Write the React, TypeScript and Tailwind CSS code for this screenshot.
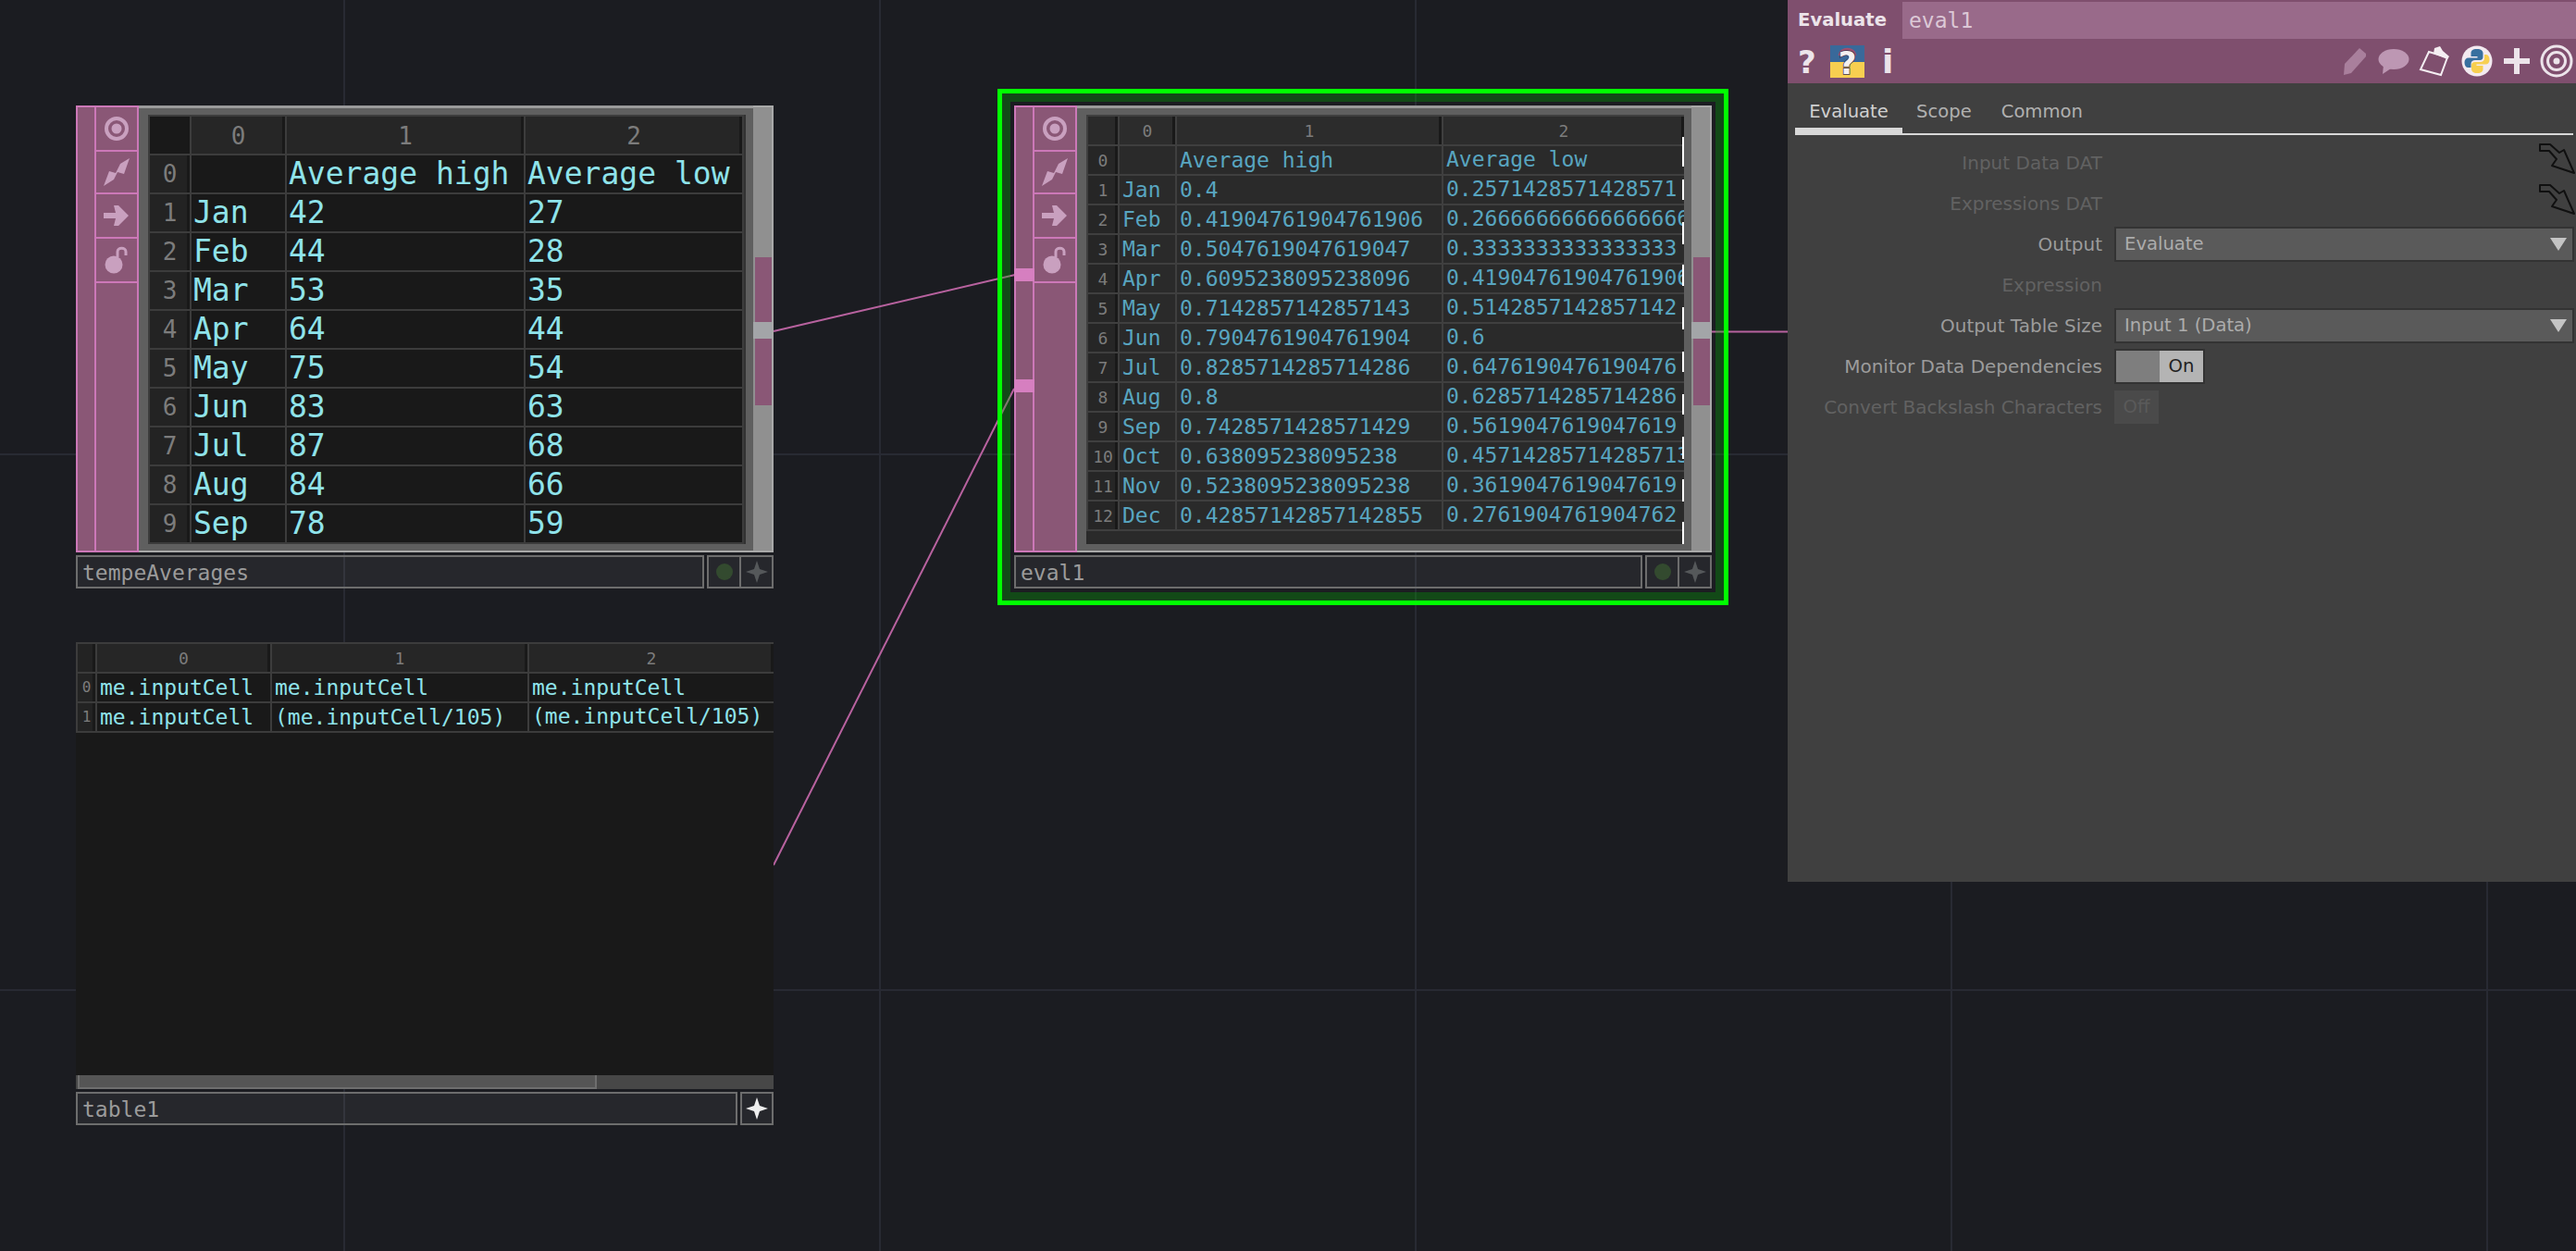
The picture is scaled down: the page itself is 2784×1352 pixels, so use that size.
import React from 'react'

const MONO = 'font-["DejaVu_Sans_Mono",monospace]'

const averages = [
  ['', 'Average high', 'Average low'],
  ['Jan', '42', '27'],
  ['Feb', '44', '28'],
  ['Mar', '53', '35'],
  ['Apr', '64', '44'],
  ['May', '75', '54'],
  ['Jun', '83', '63'],
  ['Jul', '87', '68'],
  ['Aug', '84', '66'],
  ['Sep', '78', '59'],
]

const evaluated = [
  ['', 'Average high', 'Average low'],
  ['Jan', '0.4', '0.2571428571428571'],
  ['Feb', '0.41904761904761906', '0.26666666666666666'],
  ['Mar', '0.5047619047619047', '0.3333333333333333'],
  ['Apr', '0.6095238095238096', '0.41904761904761906'],
  ['May', '0.7142857142857143', '0.5142857142857142'],
  ['Jun', '0.7904761904761904', '0.6'],
  ['Jul', '0.8285714285714286', '0.6476190476190476'],
  ['Aug', '0.8', '0.6285714285714286'],
  ['Sep', '0.7428571428571429', '0.5619047619047619'],
  ['Oct', '0.638095238095238', '0.45714285714285713'],
  ['Nov', '0.5238095238095238', '0.3619047619047619'],
  ['Dec', '0.42857142857142855', '0.2761904761904762'],
]

const expressions = [
  ['me.inputCell', 'me.inputCell', 'me.inputCell'],
  ['me.inputCell', '(me.inputCell/105)', '(me.inputCell/105)'],
]

// the white ticks down the right edge of the eval1 viewer
const ticks = [
  [24, 32], [70, 22], [116, 24], [162, 23], [208, 24], [256, 22], [302, 22], [348, 24], [394, 24], [440, 24],
]

function TargetIcon() {
  return (
    <svg width="28" height="28" viewBox="0 0 28 28">
      <circle cx="14" cy="14" r="11" fill="none" stroke="#c9a0bf" strokeWidth="4" />
      <circle cx="14" cy="14" r="5.5" fill="#c9a0bf" />
    </svg>
  )
}

function BoltIcon() {
  return (
    <svg width="28" height="30" viewBox="0 0 28 30">
      <polygon points="0,30 6,14 13,16 18,6 28,0 22,17 15,15 11,23" fill="#c9a0bf" />
    </svg>
  )
}

function ArrowIcon() {
  return (
    <svg width="28" height="24" viewBox="0 0 28 24">
      <polygon points="0,9 13,9 11,1 16,1 27,12 16,23 11,23 13,15 0,15" fill="#c9a0bf" />
    </svg>
  )
}

function LockIcon() {
  return (
    <svg width="26" height="30" viewBox="0 0 26 30">
      <circle cx="10" cy="20" r="9.5" fill="#c9a0bf" />
      <path d="M14 12 V6 C14 1 23 1 23 6 V10" fill="none" stroke="#c9a0bf" strokeWidth="3" />
    </svg>
  )
}

function StarIcon({ color }: { color: string }) {
  return (
    <svg width="24" height="24" viewBox="0 0 24 24">
      <polygon points="12,0 15,9 24,12 15,15 12,24 9,15 0,12 9,9" fill={color} />
    </svg>
  )
}

function HeaderCell({ label, size, inner }: { label?: string; size: string; inner: string }) {
  return (
    <div className={`bg-[#191919] pr-[3px] ${MONO}`}>
      <div className={`h-full flex items-center justify-center pl-[3px] text-[#7c7c7c] ${size} ${inner}`}>{label}</div>
    </div>
  )
}

function OpChrome({ children }: { children: React.ReactNode }) {
  return (
    <div className="flex h-[483px]">
      <div className="relative w-[20px] border-y-2 border-l-2 border-[#cc78b8] bg-[#8a5776]" />
      <div className="flex w-[48px] flex-col border-2 border-[#cc78b8] bg-[#8a5776]">
        <div className="flex h-[48px] items-center justify-center border-b-2 border-[#cc78b8]"><TargetIcon /></div>
        <div className="flex h-[46px] items-center justify-center border-b-2 border-[#cc78b8]"><BoltIcon /></div>
        <div className="flex h-[48px] items-center justify-center border-b-2 border-[#cc78b8]"><ArrowIcon /></div>
        <div className="flex h-[48px] items-center justify-center border-b-2 border-[#cc78b8]"><LockIcon /></div>
      </div>
      <div className="w-[664px] border-t-[3px] border-b-2 border-t-[#9a9a9a] border-b-[#a8a8a8] bg-[#5f5f5f] pl-[10px] pt-[7px]">
        {children}
      </div>
      <div className="flex w-[22px] flex-col border-y-2 border-r-2 border-[#a8a8a8] bg-[#909090]">
        <div className="h-[162px]" />
        <div className="ml-[2px] h-[70px] bg-[#8a5776]" />
        <div className="h-[18px] bg-[#a3a5a8]" />
        <div className="ml-[2px] h-[72px] bg-[#8a5776]" />
      </div>
    </div>
  )
}

function NameBar({ name, dim }: { name: string; dim: boolean }) {
  return (
    <div className="mt-[3px] flex h-[36px] gap-[3px]">
      <div className={`flex flex-1 items-center border-2 border-[#6d6d6d] bg-white/5 pl-[5px] pt-[2px] text-[23px] text-[#9b9b9b] ${MONO}`}>{name}</div>
      {dim ? (
        <div className="flex w-[72px] border-2 border-[#6d6d6d] bg-white/5">
          <div className="flex w-[35px] items-center justify-center border-r-2 border-[#6d6d6d]">
            <div className="h-[18px] w-[18px] rounded-full bg-[#334a2f]" />
          </div>
          <div className="flex flex-1 items-center justify-center"><StarIcon color="#55585a" /></div>
        </div>
      ) : (
        <div className="flex w-[36px] items-center justify-center border-2 border-[#6d6d6d] bg-white/5"><StarIcon color="#eeeeee" /></div>
      )}
    </div>
  )
}

function AveragesTable() {
  return (
    <div className={`grid h-[464px] w-[646px] grid-cols-[43px_101px_256px_234px] grid-rows-[repeat(11,40px)] gap-[2px] border-r-2 border-[#333] bg-[#3c3c3c] p-[2px] text-[33px] text-[#8fe3ea] ${MONO}`}>
      <HeaderCell size="text-[26px]" inner="bg-[#191919]" />
      {['0', '1', '2'].map((c) => (
        <HeaderCell key={c} label={c} size="text-[26px] pt-[2px]" inner="bg-[#262626]" />
      ))}
      {averages.map((row, i) => (
        <React.Fragment key={i}>
          <HeaderCell label={String(i)} size="text-[26px]" inner="bg-[#232323]" />
          {row.map((cell, j) => (
            <div key={j} className="flex items-center overflow-hidden whitespace-pre bg-[#191919] pl-[2px] leading-[40px]">{cell}</div>
          ))}
        </React.Fragment>
      ))}
    </div>
  )
}

function EvaluatedTable() {
  return (
    <div className="relative h-[464px] w-[646px] overflow-hidden bg-[#2a2a2a]">
      <div className={`grid grid-cols-[32px_60px_286px_260px] grid-rows-[repeat(14,30px)] gap-[2px] bg-[#3f3f3f] py-[2px] pl-[2px] text-[23px] text-[#58a5c0] ${MONO}`}>
        <HeaderCell size="text-[18px]" inner="bg-[#2a2a2a]" />
        {['0', '1', '2'].map((c) => (
          <HeaderCell key={c} label={c} size="text-[18px]" inner="bg-[#2c2c2c]" />
        ))}
        {evaluated.map((row, i) => (
          <React.Fragment key={i}>
            <HeaderCell label={String(i)} size="text-[18px]" inner="bg-[#262626]" />
            {row.map((cell, j) => (
              <div key={j} className={`flex items-center overflow-hidden whitespace-pre bg-[#2a2a2a] pl-[3px] ${j === 2 ? 'pb-[2px]' : 'pt-[1px]'}`}>{cell}</div>
            ))}
          </React.Fragment>
        ))}
      </div>
      {ticks.map(([top, height]) => (
        <div key={top} className="absolute right-0 w-[2px] bg-white" style={{ top, height }} />
      ))}
    </div>
  )
}

function ExpressionsTable() {
  return (
    <div className="flex h-[483px] flex-col overflow-hidden bg-[#191919]">
      <div className={`grid grid-cols-[19px_187px_276px_264px] grid-rows-[repeat(3,30px)] gap-[2px] bg-[#3c3c3c] py-[2px] pl-[2px] text-[23px] text-[#8fe3ea] ${MONO}`}>
        <HeaderCell size="text-[16px]" inner="bg-[#232323]" />
        {['0', '1', '2'].map((c) => (
          <HeaderCell key={c} label={c} size="text-[18px]" inner="bg-[#262626]" />
        ))}
        {expressions.map((row, i) => (
          <React.Fragment key={i}>
            <HeaderCell label={String(i)} size="text-[16px]" inner="bg-[#232323]" />
            {row.map((cell, j) => (
              <div key={j} className={`flex items-center overflow-hidden whitespace-pre bg-[#191919] pl-[3px] ${i === 1 && j === 2 ? 'pb-[2px]' : ''}`}>{cell}</div>
            ))}
          </React.Fragment>
        ))}
      </div>
      <div className="flex-1" />
      <div className="h-[15px] bg-[#474747] pl-[2px]">
        <div className="h-full w-[561px] border-r-2 border-b-2 border-l-2 border-[#6e6e6e] bg-[#555555]" />
      </div>
    </div>
  )
}

function HelpFlagIcon() {
  return (
    <svg width="37" height="35" viewBox="0 0 37 35">
      <rect width="37" height="18" fill="#39699a" />
      <rect y="18" width="37" height="17" fill="#f7cf50" />
      <path d="M10 11 C11 2 26 2 27 11" fill="none" stroke="#a0506e" strokeWidth="3" />
      <text x="18.5" y="31" textAnchor="middle" fontSize="34" fontWeight="700" fontFamily="DejaVu Sans" fill="#f4f0f0" stroke="#40304a" strokeWidth="1.5" paintOrder="stroke">?</text>
    </svg>
  )
}

function ParamArrow() {
  return (
    <svg width="40" height="34" viewBox="0 0 40 34" className="-translate-y-[4px]">
      <polygon points="1,1 12,1 22,10 27,7 38,32 14,24 19,17 11,8 1,8" fill="#404040" stroke="#101010" strokeWidth="2" strokeLinejoin="round" />
    </svg>
  )
}

function HeaderIcons() {
  return (
    <div className="flex items-center">
      <svg width="30" height="32" viewBox="0 0 30 32">
        <polygon points="4,19 20,2 27,8 27,11 11,29 3,31" fill="#a97f9c" />
      </svg>
      <svg width="34" height="32" viewBox="0 0 34 32" className="ml-[10px]">
        <ellipse cx="17" cy="14" rx="16.5" ry="11" fill="#bd97b3" />
        <polygon points="6,20 14,24 5,30" fill="#bd97b3" />
      </svg>
      <svg width="36" height="34" viewBox="0 0 36 34" className="ml-[10px]">
        <polygon points="11,7 31,13 24,32 2,26" fill="none" stroke="#f4eef2" strokeWidth="2" />
        <polygon points="17,3 23,1 26,6 33,12 31,15 16,9" fill="#f4eef2" />
      </svg>
      <svg width="34" height="34" viewBox="0 0 34 34" className="ml-[10px]">
        <circle cx="17" cy="17" r="16.5" fill="#f3eaf0" />
        <path d="M17 4 C12 4 10.5 6 10.5 8.5 V12 H17.5 V13.5 H8 C5 13.5 3.5 15.5 3.5 18.5 C3.5 22 5 24 7.5 24 H10.5 V20 C10.5 17.5 12.5 16 15 16 H20 C22.5 16 23.5 14.5 23.5 12.5 V8.5 C23.5 6 21.5 4 17 4 Z" fill="#38709f" />
        <path d="M17 30 C22 30 23.5 28 23.5 25.5 V22 H16.5 V20.5 H26 C29 20.5 30.5 18.5 30.5 15.5 C30.5 12 29 10 26.5 10 H25 V14 C25 16.5 23 18 20.5 18 H15 C12.5 18 11 19.5 11 21.5 V25.5 C11 28 13 30 17 30 Z" fill="#f7cf50" />
      </svg>
      <svg width="28" height="28" viewBox="0 0 28 28" className="ml-[12px]">
        <rect x="11" y="0" width="6" height="28" fill="#ece4ea" />
        <rect x="0" y="11" width="28" height="6" fill="#ece4ea" />
      </svg>
      <svg width="36" height="36" viewBox="0 0 36 36" className="mr-[3px] ml-[11px]">
        <circle cx="18" cy="18" r="16" fill="none" stroke="#ece4ea" strokeWidth="3" />
        <circle cx="18" cy="18" r="9.5" fill="none" stroke="#ece4ea" strokeWidth="3" />
        <circle cx="18" cy="18" r="3.5" fill="#ece4ea" />
      </svg>
    </div>
  )
}

function ParamRow({ label, dim, children }: { label: string; dim?: boolean; children?: React.ReactNode }) {
  return (
    <div className="flex h-[44px] items-center">
      <div className={`w-[340px] text-right text-[20px] ${dim ? 'text-[#626262]' : 'text-[#9c9c9c]'}`}>{label}</div>
      <div className="ml-[13px] flex flex-1 items-center">{children}</div>
    </div>
  )
}

function Dropdown({ value }: { value: string }) {
  return (
    <div className="flex h-[38px] w-[497px] items-center justify-between border-2 border-[#333333] bg-[#5a5a5a] pl-[9px] pr-[6px] text-[#acacac]">
      {value}
      <svg width="18" height="14" viewBox="0 0 18 14"><polygon points="0,0 18,0 9,14" fill="#c4c4c4" /></svg>
    </div>
  )
}

function ParamPanel() {
  return (
    <div className="absolute left-[1932px] top-0 h-[953px] w-[852px] bg-[#404040] font-['DejaVu_Sans',sans-serif] text-[19.6px]">
      <div className="h-[90px] bg-[#7f4f6e] pt-[2px]">
        <div className="flex h-[40px]">
          <div className="flex w-[124px] items-center pl-[11px] font-bold text-[#ece4ea]">Evaluate</div>
          <div className={`flex flex-1 items-center bg-[#996a8a] pl-[7px] text-[23px] text-[#dcc8d6] ${MONO}`}>eval1</div>
        </div>
        <div className="flex h-[48px] items-center justify-between pl-[11px]">
          <div className="flex items-center">
            <span className="w-[35px] pt-[2px] text-[34px] font-bold text-[#ece4ea]">?</span>
            <HelpFlagIcon />
            <span className="ml-[19px] pt-[2px] text-[36px] font-bold text-[#ece4ea]">i</span>
          </div>
          <HeaderIcons />
        </div>
      </div>
      <div className="mr-[3px] ml-[8px] flex h-[56px] items-end border-b-2 border-[#d8d8d8] text-[#b0b0b0]">
        <div className="flex h-[48px] w-[116px] items-center justify-center border-b-[6px] border-[#d8d8d8] pt-[7px] text-[#d0d0d0]">Evaluate</div>
        <div className="ml-[15px] flex h-[48px] items-center pt-[2px]">Scope</div>
        <div className="ml-[32px] flex h-[48px] items-center pt-[2px]">Common</div>
      </div>
      <div className="pt-[8px]">
        <ParamRow label="Input Data DAT" dim><div className="ml-auto"><ParamArrow /></div></ParamRow>
        <ParamRow label="Expressions DAT" dim><div className="ml-auto"><ParamArrow /></div></ParamRow>
        <ParamRow label="Output"><Dropdown value="Evaluate" /></ParamRow>
        <ParamRow label="Expression" dim />
        <ParamRow label="Output Table Size"><Dropdown value="Input 1 (Data)" /></ParamRow>
        <ParamRow label="Monitor Data Dependencies">
          <div className="flex h-[38px] w-[98px] border-2 border-[#333333]">
            <div className="w-[47px] bg-[#7e7e7e]" />
            <div className="flex flex-1 items-center justify-center bg-[#b4b4b4] text-[#222222]">On</div>
          </div>
        </ParamRow>
        <ParamRow label="Convert Backslash Characters" dim>
          <div className="flex h-[36px] w-[48px] items-center justify-center bg-[#4a4a4a] text-[#5a5a5a]">Off</div>
        </ParamRow>
      </div>
    </div>
  )
}

export default function App() {
  const vertical = [371, 950, 1529, 2108, 2687]
  const horizontal = [490, 1069]

  return (
    <div className="relative h-[1352px] w-[2784px] overflow-hidden bg-[#1b1c21]">
      {/* network grid */}
      {vertical.map((x) => (
        <div key={x} className="absolute top-0 h-full w-[2px] bg-[#282a33]" style={{ left: x }} />
      ))}
      {horizontal.map((y) => (
        <div key={y} className="absolute left-0 h-[2px] w-full bg-[#282a33]" style={{ top: y }} />
      ))}

      {/* wires */}
      <svg className="absolute inset-0" width="2784" height="1352">
        <line x1="836" y1="358" x2="1097" y2="297" stroke="#b8629f" strokeWidth="2" />
        <line x1="836" y1="935" x2="1096" y2="420" stroke="#b8629f" strokeWidth="2" />
        <line x1="1850" y1="358.5" x2="1932" y2="358.5" stroke="#b8629f" strokeWidth="2" />
      </svg>

      {/* tempeAverages */}
      <div className="absolute left-[82px] top-[114px] w-[754px]">
        <OpChrome><AveragesTable /></OpChrome>
        <NameBar name="tempeAverages" dim />
      </div>

      {/* table1 */}
      <div className="absolute left-[82px] top-[694px] w-[754px]">
        <ExpressionsTable />
        <NameBar name="table1" dim={false} />
      </div>

      {/* eval1, selected */}
      <div className="absolute left-[1078px] top-[96px] h-[558px] w-[790px] border-[5px] border-[#00ff00]">
        <div className="h-full w-full border-[9px] border-[#00b400]/30" />
      </div>
      <div className="absolute left-[1096px] top-[114px] w-[754px]">
        <OpChrome><EvaluatedTable /></OpChrome>
        <div className="absolute left-0 top-[176px] h-[14px] w-[22px] bg-[#d67fc0]" />
        <div className="absolute left-0 top-[296px] h-[14px] w-[22px] bg-[#d67fc0]" />
        <NameBar name="eval1" dim />
      </div>

      <ParamPanel />
    </div>
  )
}
